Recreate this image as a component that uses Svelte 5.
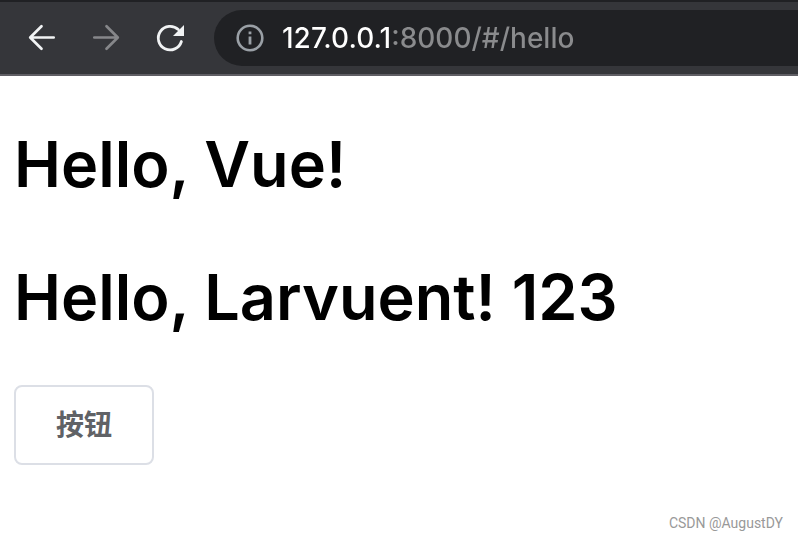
<script>
  let address = $state('127.0.0.1:8000/#/hello');
  const headings = ['Hello, Vue!', 'Hello, Larvuent! 123'];
</script>

<div class="browser">
  <header class="toolbar">
    <nav class="controls" aria-label="Navigation">
      <button class="nav" type="button" aria-label="Back">
        <svg width="32" height="32" viewBox="0 0 32 32" fill="none" stroke="currentColor" stroke-width="2.7" stroke-linecap="round" stroke-linejoin="round">
          <path d="M27.7 15.5H4.5M15.5 4.2L4.2 15.5L15.5 26.8" />
        </svg>
      </button>
      <button class="nav dim" type="button" aria-label="Forward" disabled>
        <svg width="32" height="32" viewBox="0 0 32 32" fill="none" stroke="currentColor" stroke-width="2.7" stroke-linecap="round" stroke-linejoin="round">
          <path d="M4.3 15.5H27.5M16.5 4.2L27.8 15.5L16.5 26.8" />
        </svg>
      </button>
      <button class="nav" type="button" aria-label="Reload">
        <svg width="32" height="32" viewBox="0 0 32 32">
          <path d="M27.4 19.5A11.8 11.8 0 1 1 24.3 7.6" fill="none" stroke="currentColor" stroke-width="2.8" stroke-linecap="round" />
          <path d="M30 3V14H19Z" fill="currentColor" />
        </svg>
      </button>
    </nav>
    <div class="omnibox">
      <svg class="info" width="28" height="28" viewBox="0 0 28 28" aria-hidden="true">
        <circle cx="14" cy="14" r="12.3" fill="none" stroke="currentColor" stroke-width="2.6" />
        <path d="M12.6 7.5H15.4V10.2H12.6ZM12.6 12.6H15.4V20.5H12.6Z" fill="currentColor" />
      </svg>
      <input class="url" type="text" aria-label="Address" spellcheck="false" bind:value={address} />
    </div>
  </header>

  <main>
    {#each headings as heading}
      <h1>{heading}</h1>
    {/each}
    <button class="action" type="button">按钮</button>
  </main>

  <footer>CSDN @AugustDY</footer>
</div>

<style>
  :global(body) {
    margin: 0;
    background: #fff;
  }

  .browser {
    display: flex;
    flex-direction: column;
    min-height: 100vh;
    font-family: Inter, "Noto Sans CJK SC", sans-serif;
  }

  .toolbar {
    display: flex;
    align-items: center;
    box-sizing: border-box;
    height: 76px;
    padding-left: 26px;
    background: #35363a;
    border-top: 2px solid #202124;
    border-bottom: 2px solid #5f5e64;
  }

  .controls {
    display: flex;
    gap: 32px;
    margin-right: 28px;
  }

  .nav {
    display: block;
    padding: 0;
    border: 0;
    background: none;
    color: #f1f3f4;
  }

  .nav svg {
    display: block;
  }

  .dim {
    color: #86878a;
  }

  .omnibox {
    display: flex;
    flex: 1;
    align-items: center;
    gap: 18px;
    height: 56px;
    padding-left: 22px;
    border-radius: 28px 0 0 28px;
    background: #202124;
  }

  .info {
    flex: none;
    color: #9aa0a6;
  }

  /* The host is white; port and path are grey. */
  .url {
    flex: 1;
    min-width: 0;
    padding: 0;
    border: 0;
    outline: 0;
    font: 500 28px/40px Inter, sans-serif;
    color: transparent;
    caret-color: #fff;
    background: linear-gradient(90deg, #fff 110px, #8a8b8d 110px);
    background-clip: text;
    -webkit-background-clip: text;
  }

  main {
    flex: 1;
    padding: 43px 14px 0;
  }

  h1 {
    margin: 0 0 43px;
    font-size: 63px;
    line-height: 90px;
    font-weight: 600;
    color: #000;
  }

  .action {
    display: block;
    height: 80px;
    padding: 0 40px 4px;
    border: 2px solid #dcdfe6;
    border-radius: 8px;
    background: #fff;
    color: #606266;
    font: 700 28px/36px "Noto Sans CJK SC", sans-serif;
  }

  footer {
    padding: 0 15px 8px;
    text-align: right;
    font: 400 14px/18px Roboto, sans-serif;
    color: #999;
  }
</style>
